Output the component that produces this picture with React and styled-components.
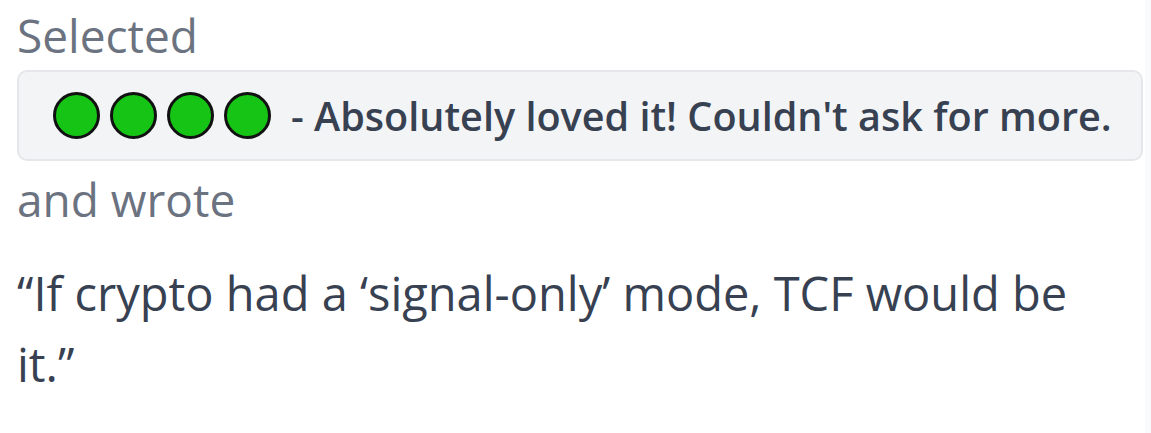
import React from 'react'
import styled, { createGlobalStyle } from 'styled-components'

const Global = createGlobalStyle`
	body {
		margin: 0;
		background: #fff;
		font-family: "Open Sans", "Noto Sans", sans-serif;
	}
`

const Page = styled.div`
	display: flex;
	width: 1151px;
	height: 433px;
	overflow: hidden;
`

const Main = styled.main`
	flex: 1;
	min-width: 0;
	padding: 4px 2px 0 17px;
	display: flex;
	flex-flow: column;
`

const Gutter = styled.div`
	flex-shrink: 0;
	width: 6px;
	background: #f9fafb;
`

const Label = styled.div`
	font-size: 46px;
	line-height: 62px;
	color: #6b7280;
`

const RatingBox = styled.div`
	display: flex;
	align-items: center;
	gap: 20px;
	height: 91px;
	box-sizing: border-box;
	padding: 0 28px 0 34px;
	margin: 4px 0 7px;
	background: #f3f4f6;
	border: 2px solid #e5e7eb;
	border-radius: 10px;
`

const Dots = styled.div`
	display: flex;
	gap: 10px;
`

const Dot = styled.span`
	display: block;
	width: 41px;
	height: 41px;
	border-radius: 50%;
	background: #16c416;
	border: 3px solid #111;
`

const RatingText = styled.span`
	font-size: 39.6px;
	font-weight: 600;
	color: #374151;
	white-space: nowrap;
`

const Quote = styled.p`
	margin: 28px 0 0;
	font-size: 47px;
	line-height: 71px;
	color: #374151;
	max-width: 1090px;
`

const App = () => (
	<Page>
		<Global />
		<Main>
			<Label>Selected</Label>
			<RatingBox>
				<Dots>
					<Dot />
					<Dot />
					<Dot />
					<Dot />
				</Dots>
				<RatingText>- Absolutely loved it! Couldn't ask for more.</RatingText>
			</RatingBox>
			<Label>and wrote</Label>
			<Quote>“If crypto had a ‘signal-only’ mode, TCF would be it.”</Quote>
		</Main>
		<Gutter />
	</Page>
)

export default App
